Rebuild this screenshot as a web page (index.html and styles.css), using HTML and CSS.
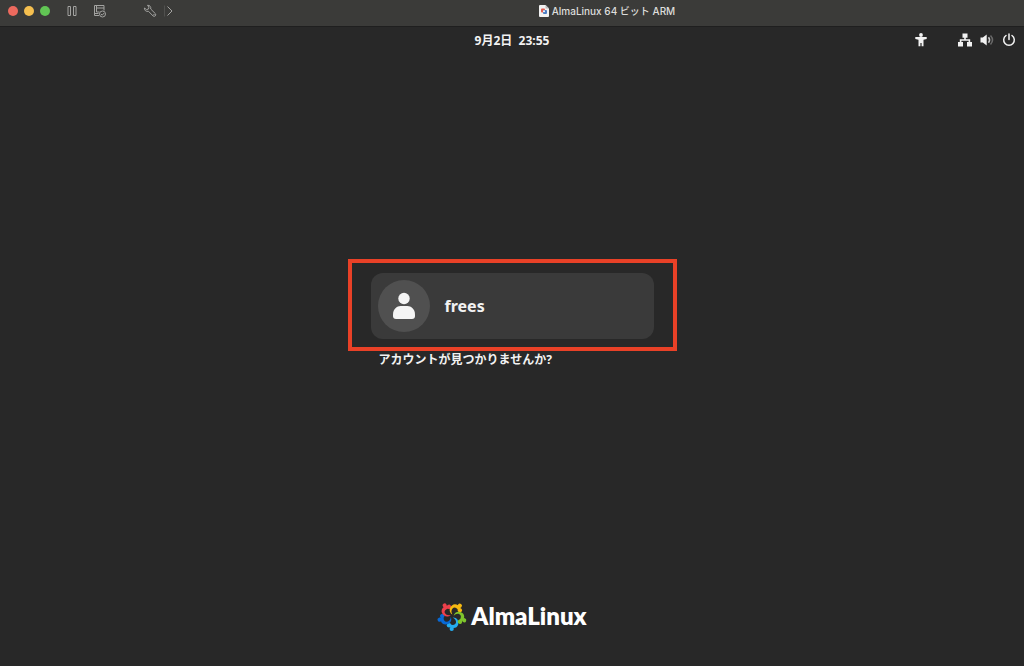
FILE: index.html
```html
<!DOCTYPE html>
<html lang="ja">
<head>
<meta charset="utf-8">
<title>AlmaLinux 64 ビット ARM</title>
<link rel="stylesheet" href="styles.css">
</head>
<body>
<header class="titlebar">
  <div class="tools">
    <div class="lights">
      <button class="light close" aria-label="閉じる"></button>
      <button class="light minimize" aria-label="しまう"></button>
      <button class="light expand" aria-label="拡大"></button>
    </div>
    <button class="tool pause" aria-label="一時停止"><svg width="14" height="14" viewBox="0 0 14 14"><path d="M3 2.500h2.500v9H3zM8.500 2.500H11v9H8.500z"/></svg></button>
    <button class="tool snapshot" aria-label="スナップショット"><svg width="14" height="14" viewBox="0 0 14 14"><path d="M6 11.500H1.500v-10h9.500v5M3.500 1.500v6.500h3M3.500 4h7.500M1.500 9.500h4"/><circle cx="9.500" cy="10" r="3"/><path d="M8 10l1.200 1.200 2-2.200"/></svg></button>
    <button class="tool settings" aria-label="設定"><svg width="14" height="14" viewBox="0 0 14 14"><path d="M4.500 1.300C6.600 1 8.300 2.900 7.700 5L12.400 9.700C13.600 11.200 11.700 13.200 10.100 12L5.500 7.300C3.200 8 1.100 6.200 1.400 4L3.500 5.600 5.500 5 5.900 3.200Z"/><circle cx="11" cy="10.800" r=".3"/></svg></button>
    <button class="tool more" aria-label="その他"><svg width="10" height="14" viewBox="0 0 10 14"><path class="divider" d="M.5 1.500v11"/><path d="M3.500 2.500L8 7 3.500 11.500"/></svg></button>
  </div>
  <h1 class="title">
    <svg width="10" height="12" viewBox="0 0 10 12"><path fill="#f2f2f2" d="M1 0h5.500L10 3.500V11a1 1 0 0 1-1 1H1a1 1 0 0 1-1-1V1a1 1 0 0 1 1-1z"/><path fill="#bbb" d="M6.500 0L10 3.500H6.500z"/><rect x="2" y="3.500" width="4" height="4" rx="1" fill="#df5b50"/><rect x="4" y="5" width="4" height="4" rx="1" fill="#4c7ec4"/><circle cx="5" cy="6.200" r="1" fill="#fff"/></svg>
    <span>AlmaLinux 64 ビット ARM</span>
  </h1>
</header>
<div class="panel">
  <time class="clock" datetime="09-02T23:55">9月2日&nbsp; 23:55</time>
  <div class="status">
    <button class="indicator access" aria-label="アクセシビリティ"><svg width="14" height="14" viewBox="0 0 14 14"><circle cx="7" cy="2" r="1.900"/><path d="M1.300 4h11.400v2L9.500 6.800V13.300H7.600V10H6.400v3.300H4.500V6.800L1.300 6z"/></svg></button>
    <button class="indicator" aria-label="ネットワーク"><svg width="14" height="14" viewBox="0 0 14 14"><path d="M4.500.5h5v4.300H7.800V6.300h4.400V9H14v4.500H9V9h1.600V7.800H3.400V9H5v4.500H0V9h1.800V6.300h4.400V4.800H4.500z"/></svg></button>
    <button class="indicator" aria-label="音量"><svg width="14" height="14" viewBox="0 0 14 14"><path d="M.5 4.500h2.300L6.700 1.500v11L2.800 9.500H.5z"/><path class="wave" d="M8.500 4.300q2.200 2.700 0 5.400"/><path class="wave faint" d="M10.500 2.500q4 4.500 0 9"/></svg></button>
    <button class="indicator" aria-label="電源"><svg width="14" height="14" viewBox="0 0 14 14"><path class="power" d="M4 2.500a5.300 5.300 0 1 0 6 0M7 1v5.500"/></svg></button>
  </div>
</div>
<main class="login">
  <div class="chooser">
    <div class="highlight">
      <button class="user">
        <span class="avatar"><svg width="24" height="28" viewBox="0 0 24 28"><circle cx="12" cy="6.500" r="5.700"/><path d="M4 27a3 3 0 0 1-3-3v-1.500C1 17 5 14 8.500 14h7c3.500 0 7.500 3 7.500 8.500V24a3 3 0 0 1-3 3z"/></svg></span>
        <span class="name">frees</span>
      </button>
    </div>
    <a class="missing" href="#">アカウントが見つかりませんか?</a>
  </div>
</main>
<footer class="brand">
  <svg width="30" height="30" viewBox="-15 -15 30 30">
    <defs><g id="petal"><path d="M.6 1.500C4.500 1 7.300 4.500 6.200 8.500C5.300 12 1.500 13.200-2.500 11L-1.500 8.300C1 9.500 3.500 8.800 4 6.500C4.300 4.500 3 2.500.6 1.500Z" fill="currentColor"/><circle cx="-3" cy="9.300" r="2.200" fill="currentColor"/><circle cx="-.3" cy="12.900" r="2.100" fill="currentColor"/></g></defs>
    <use href="#petal" class="cyan"/>
    <use href="#petal" class="blue" transform="rotate(72)"/>
    <use href="#petal" class="red" transform="rotate(144)"/>
    <use href="#petal" class="yellow" transform="rotate(216)"/>
    <use href="#petal" class="green" transform="rotate(288)"/>
  </svg>
  <span class="wordmark">AlmaLinux</span>
</footer>
</body>
</html>
```
FILE: styles.css
```css
* { box-sizing: border-box; }
body {
  margin: 0;
  min-height: 100vh;
  display: flex;
  flex-direction: column;
  background: #282828;
  color: #f2f2f2;
  font-family: "Noto Sans", "Noto Sans CJK JP", sans-serif;
}
button {
  margin: 0;
  padding: 0;
  border: 0;
  background: none;
  color: inherit;
  font: inherit;
}
svg { display: block; flex: none; }
.titlebar {
  display: grid;
  grid-template-columns: 1fr auto 1fr;
  align-items: center;
  height: 27px;
  padding: 0 8px 4px;
  background: #3b3b39;
  border-bottom: 1px solid #1f1f1f;
}
.tools { display: flex; align-items: center; }
.lights { display: flex; gap: 6px; }
.light { width: 10px; height: 10px; border-radius: 50%; }
.close { background: #ed6a5e; }
.minimize { background: #f5bf4f; }
.expand { background: #61c554; }
.tool svg { fill: none; stroke: #a3a3a1; stroke-width: 1; }
.tool .divider { stroke: #50504e; }
.pause { margin-left: 15px; }
.snapshot { margin-left: 14px; }
.settings { margin-left: 36px; }
.more { margin-left: 7px; }
.title {
  grid-column: 2;
  display: flex;
  align-items: center;
  gap: 3px;
  margin: 0 0 0 190px;
  color: #dededc;
  font: 500 10px/16px Inter, "Noto Sans CJK JP", sans-serif;
}
.panel {
  display: grid;
  grid-template-columns: 1fr auto 1fr;
  align-items: center;
  height: 26px;
  padding: 0 8px;
}
.clock { grid-column: 2; padding-top: 2px; font-size: 12px; line-height: 18px; font-weight: 700; }
.status { display: flex; justify-content: flex-end; gap: 8px; }
.access { margin-right: 22px; }
.indicator svg { fill: #f2f2f2; }
.indicator .wave { fill: none; stroke: #c8c8c8; stroke-width: 1.5; }
.indicator .faint { stroke: #696969; }
.indicator .power { fill: none; stroke: #f2f2f2; stroke-width: 1.5; stroke-linecap: round; }
.login {
  flex: 1;
  display: flex;
  align-items: center;
  justify-content: center;
  padding-bottom: 28px;
}
.chooser { width: 329px; max-width: 100%; }
.highlight { padding: 10px 19px 8px; border: 4px solid #e94127; }
.user {
  display: flex;
  align-items: center;
  gap: 15px;
  width: 100%;
  padding: 7px;
  border-radius: 12px;
  background: #3a3a3a;
}
.avatar {
  display: grid;
  place-items: center;
  width: 52px;
  height: 52px;
  border-radius: 50%;
  background: #505050;
}
.avatar svg { fill: #f5f5f5; }
.name { font-size: 16px; line-height: 24px; font-weight: 700; }
.missing {
  display: block;
  padding-left: 31px;
  color: #f2f2f2;
  font-size: 12px;
  line-height: 17px;
  font-weight: 700;
  text-decoration: none;
}
.brand {
  display: flex;
  align-items: center;
  justify-content: center;
  gap: 4px;
  padding-bottom: 35px;
}
.wordmark {
  color: #fff;
  font: 800 24px/30px Lato, sans-serif;
}
.cyan { color: #24aef0; }
.blue { color: #0869d5; }
.red { color: #ed404b; }
.yellow { color: #f6b911; }
.green { color: #7fc52c; }
```
